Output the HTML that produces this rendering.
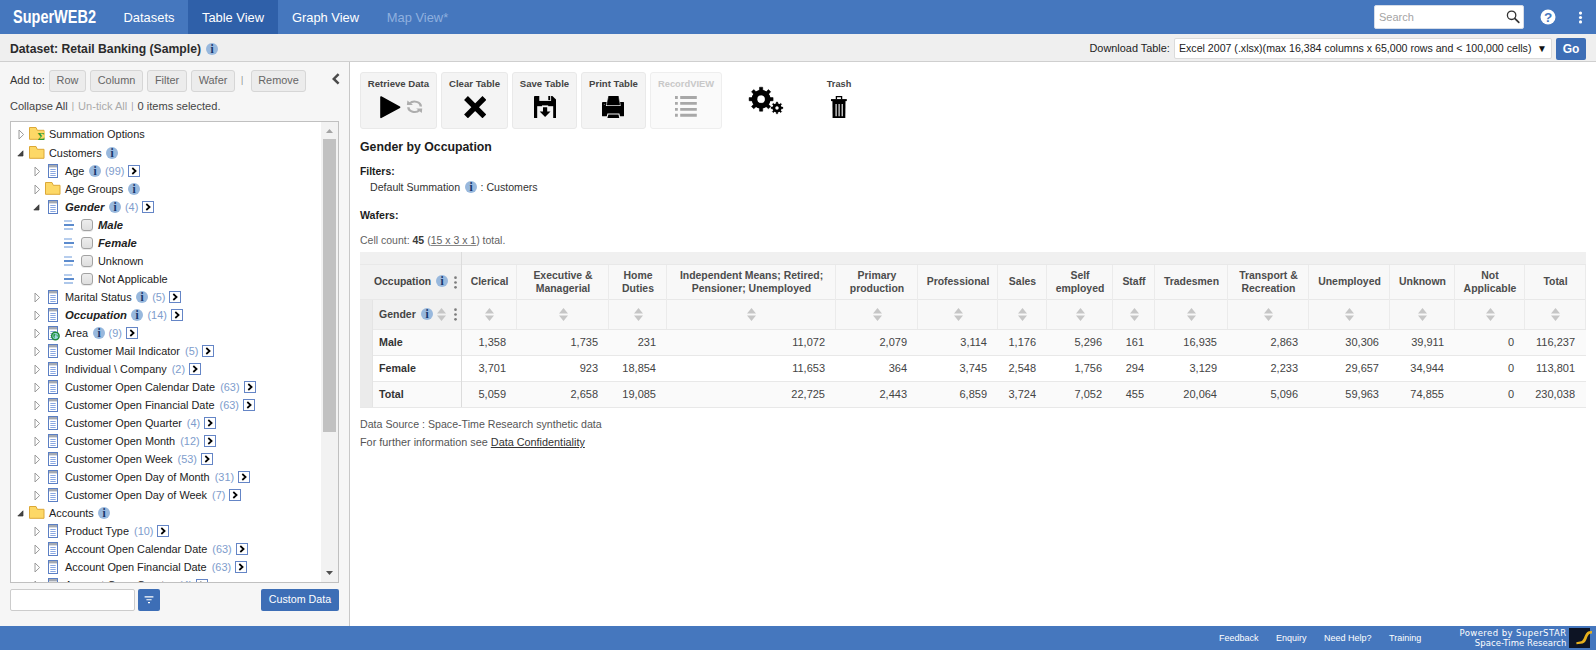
<!DOCTYPE html>
<html lang="en">
<head>
<meta charset="utf-8">
<title>SuperWEB2 - Table View</title>
<style>
*{box-sizing:border-box;margin:0;padding:0}
html,body{width:1596px;height:650px;overflow:hidden;background:#fff}
body{font-family:"Liberation Sans",sans-serif;font-size:12px;color:#333;position:relative}
.abs{position:absolute;white-space:nowrap}
/* header */
#hdr{position:absolute;left:0;top:0;width:1596px;height:34px;background:#4577be}
#logo{position:absolute;left:13px;top:5px;font-size:18px;line-height:24px;font-weight:bold;color:#fff;transform:scaleX(.806);transform-origin:0 50%}
.nav{position:absolute;top:0;height:34px;line-height:35px;font-size:12.9px;color:#fff;text-align:center;white-space:nowrap}
.nav.act{background:#2f60a9}
.nav.dis{color:#8fb0de}
#search{position:absolute;left:1374px;top:5px;width:150px;height:24px;background:#fff;border-radius:2px;border:1px solid #d5dce8}
#search span{position:absolute;left:4px;top:0;line-height:23px;font-size:11px;color:#a4a4a4}
/* sub header */
#sub{position:absolute;left:0;top:34px;width:1596px;height:28px;background:#efefef;border-bottom:1px solid #cfcfcf}
#dstitle{position:absolute;left:10px;top:1px;line-height:28px;font-size:12.2px;font-weight:bold;color:#2b2b2b;white-space:nowrap}
#dl{position:absolute;left:1089.5px;top:0;line-height:28px;font-size:10.9px;color:#222;white-space:nowrap}
#sel{position:absolute;left:1174px;top:4px;width:378px;height:21px;background:#fff;border:1px solid #dbdbdb;border-radius:2px;font-size:10.6px;line-height:19px;padding-left:4px;color:#222;white-space:nowrap;overflow:hidden}
#go{position:absolute;left:1556px;top:4px;width:30px;height:22px;background:#3d6eb6;border-radius:2px;color:#fff;font-size:12px;font-weight:bold;text-align:center;line-height:22px}
/* left panel */
#left{position:absolute;left:0;top:62px;width:350px;height:564px;background:#f6f6f6;border-right:1px solid #c8c8c8}
.btn{position:absolute;top:8px;height:22px;border:1px solid #d6d6d6;background:#ececec;border-radius:3px;font-size:10.9px;line-height:19px;text-align:center;color:#666}
#tree{position:absolute;left:10px;top:59px;width:329px;height:462px;background:#fff;border:1px solid #c0c0c0;overflow:hidden}
.row{position:absolute;left:0;height:18px;line-height:18px;font-size:10.9px;color:#222;white-space:nowrap}
.row .t{position:absolute;top:0}
.cnt{color:#7d9ccc}
.bi{font-weight:bold;font-style:italic;font-size:11.25px}
.nx{margin-left:2px}
.ic{position:absolute}
.inf{display:inline-block;vertical-align:-2px;margin:0 1px 0 1.5px}
.arr{display:inline-block;vertical-align:-2px;margin:0 1px}
.chk{position:absolute;top:3px;width:12px;height:12px;border:1px solid #a2a2a2;border-radius:3px;background:linear-gradient(#ededed,#dedede);box-shadow:0 1px 0 rgba(0,0,0,.08)}
/* footer */
#ftr{position:absolute;left:0;top:626px;width:1596px;height:24px;background:#4577be}
.fl{position:absolute;top:0;line-height:24px;font-size:9px;color:#fff;white-space:nowrap}
#pw{position:absolute;right:29.5px;top:2px;font-family:"DejaVu Sans",sans-serif;font-size:8.5px;line-height:10px;color:#fff;text-align:right;white-space:nowrap;letter-spacing:.3px}
/* main */
.tb{position:absolute;top:72px;height:57px;background:#f4f4f4;border:1px solid #e9e9e9;border-radius:3px}
.tb .l{position:absolute;left:0;right:0;top:4px;text-align:center;font-size:9.6px;font-weight:bold;color:#444;line-height:14px;white-space:nowrap}
.tb.dis{background:#fafafa;border-color:#eeeeee}
.tb.dis .l{color:#c8c8c8;font-size:9.35px}
.tb svg{position:absolute}
.h{font-weight:bold;color:#1c1c1c}
/* table */
#tblbg{position:absolute;left:360px;top:252px;width:1226px;height:155px;background:#fff}
.cell{position:absolute;white-space:nowrap;font-size:11.5px;color:#333}
.hc{position:absolute;text-align:center;font-weight:bold;font-size:10.45px;line-height:13px;color:#4c4c4c}
.num{position:absolute;text-align:right;font-size:11px;color:#444;line-height:26px;height:26px}
.vl{position:absolute;width:1px;background:#e4e4e4}
.hl{position:absolute;height:1px;background:#e8e8e8}
</style>
</head>
<body>
<!-- HEADER -->
<div id="hdr">
  <div id="logo">SuperWEB2</div>
  <div class="nav" style="left:110px;width:78px">Datasets</div>
  <div class="nav act" style="left:188px;width:90px">Table View</div>
  <div class="nav" style="left:278px;width:95px">Graph View</div>
  <div class="nav dis" style="left:373px;width:89px">Map View*</div>
  <div id="search"><span>Search</span>
    <svg style="position:absolute;left:131px;top:3px" width="16" height="16" viewBox="0 0 16 16"><circle cx="5.6" cy="6.3" r="4.2" fill="none" stroke="#333" stroke-width="1.3"/><path d="M8.7 9.4 L12.8 13.4" stroke="#333" stroke-width="1.7" stroke-linecap="round"/></svg>
  </div>
  <svg style="position:absolute;left:1540px;top:9px" width="16" height="16" viewBox="0 0 16 16"><circle cx="8" cy="8" r="7.5" fill="#fff"/><text x="8" y="12.8" text-anchor="middle" font-family="Liberation Sans, sans-serif" font-weight="bold" font-size="13.5" fill="#4577be">?</text></svg>
  <svg style="position:absolute;left:1577.5px;top:10.6px" width="5" height="13" viewBox="0 0 5 13"><circle cx="2.5" cy="2.1" r="1.55" fill="#fff"/><circle cx="2.5" cy="6.5" r="1.55" fill="#fff"/><circle cx="2.5" cy="10.9" r="1.55" fill="#fff"/></svg>
</div>
<!-- SUB HEADER -->
<div id="sub">
  <div id="dstitle">Dataset: Retail Banking (Sample) <svg class="inf" width="12" height="12" viewBox="0 0 12 12"><circle cx="6" cy="6" r="6" fill="#98b8dd"/><text x="6" y="10" text-anchor="middle" font-family="Liberation Serif, serif" font-weight="bold" font-size="11.5" fill="#17356b">i</text></svg></div>
  <div id="dl">Download Table:</div>
  <div id="sel">Excel 2007 (.xlsx)(max 16,384 columns x 65,000 rows and &lt; 100,000 cells)<span style="position:absolute;right:4px;top:0px;font-size:10px;color:#111">&#9660;</span></div>
  <div id="go">Go</div>
</div>
<!-- LEFT PANEL -->
<div id="left">
  <div class="abs" style="left:10px;top:7px;line-height:22px;font-size:11px;color:#333">Add to:</div>
  <div class="btn" style="left:49px;width:37px">Row</div>
  <div class="btn" style="left:90px;width:53px">Column</div>
  <div class="btn" style="left:147px;width:40px">Filter</div>
  <div class="btn" style="left:191px;width:44px">Wafer</div>
  <div class="abs" style="left:241px;top:7px;line-height:22px;font-size:8.5px;color:#888">|</div>
  <div class="btn" style="left:251px;width:55px">Remove</div>
  <svg style="position:absolute;left:330.5px;top:10.6px" width="9" height="12" viewBox="0 0 9 12"><path d="M7.6 1.2 L2.8 5.9 L7.6 10.6" fill="none" stroke="#4a4a4a" stroke-width="2.5"/></svg>
  <div class="abs" style="left:10px;top:36px;line-height:16px;font-size:11.05px;color:#444">Collapse All <span style="color:#999;font-size:8.5px;vertical-align:1px;margin:0 1px">|</span> <span style="color:#aaa">Un-tick All</span> <span style="color:#999;font-size:8.5px;vertical-align:1px;margin:0 1px">|</span> 0 items selected.</div>
  <div id="tree"><div class="row" style="top:3px"><svg class="ic" style="left:7px;top:4px" width="7" height="11" viewBox="0 0 7 11"><path d="M1 1 L5.6 5.5 L1 10 Z" fill="#fff" stroke="#9a9a9a" stroke-width="1"/></svg><svg class="ic" style="left:18px;top:2px" width="17" height="14" viewBox="0 0 17 14"><path d="M.5 12.3 V.5 H7 L8.3 3.3 H15 V12.3 Z" fill="#fdd866" stroke="#dca837" stroke-width="1"/> <rect x="8.6" y="4.5" width="7" height="8.4" fill="#fdd866"/><text x="8.4" y="13.4" font-family="Liberation Serif, serif" font-weight="bold" font-size="11" fill="#2e9a2e">&#931;</text></svg><span class="t" style="left:38px"><span class="">Summation Options</span></span></div>
<div class="row" style="top:22px"><svg class="ic" style="left:6px;top:6.3px" width="7" height="7" viewBox="0 0 7 7"><path d="M6 .8 L6 6 L.8 6 Z" fill="#444" stroke="#333" stroke-width=".7"/></svg><svg class="ic" style="left:18px;top:2px" width="17" height="14" viewBox="0 0 17 14"><path d="M.5 12.3 V.5 H7 L8.3 3.3 H15 V12.3 Z" fill="#fdd866" stroke="#dca837" stroke-width="1"/></svg><span class="t" style="left:38px"><span class="">Customers</span> <svg class="inf" width="12" height="12" viewBox="0 0 12 12"><circle cx="6" cy="6" r="6" fill="#98b8dd"/><text x="6" y="10" text-anchor="middle" font-family="Liberation Serif, serif" font-weight="bold" font-size="11.5" fill="#17356b">i</text></svg></span></div>
<div class="row" style="top:40px"><svg class="ic" style="left:23px;top:4px" width="7" height="11" viewBox="0 0 7 11"><path d="M1 1 L5.6 5.5 L1 10 Z" fill="#fff" stroke="#9a9a9a" stroke-width="1"/></svg><svg class="ic" style="left:37px;top:2px;overflow:visible" width="10" height="14" viewBox="0 0 10 14"><rect x=".5" y=".5" width="9" height="13" fill="#fff" stroke="#5b7fc4"/><rect x="1" y="1" width="8" height="2.4" fill="#a4a9b2"/><path d="M2.3 5.5H7.7M2.3 7.5H7.7M2.3 9.5H7.7M2.3 11.5H7.7" stroke="#8aa8e2" stroke-width="1"/></svg><span class="t" style="left:54px"><span class="">Age</span> <svg class="inf" width="12" height="12" viewBox="0 0 12 12"><circle cx="6" cy="6" r="6" fill="#98b8dd"/><text x="6" y="10" text-anchor="middle" font-family="Liberation Serif, serif" font-weight="bold" font-size="11.5" fill="#17356b">i</text></svg> <span class="cnt">(99)</span> <svg class="arr" width="12" height="12" viewBox="0 0 12 12"><rect x=".5" y=".5" width="11" height="11" fill="#fff" stroke="#6485c6"/><path d="M4.3 3 L7.6 6 L4.3 9" fill="none" stroke="#000" stroke-width="1.7"/></svg></span></div>
<div class="row" style="top:58px"><svg class="ic" style="left:23px;top:4px" width="7" height="11" viewBox="0 0 7 11"><path d="M1 1 L5.6 5.5 L1 10 Z" fill="#fff" stroke="#9a9a9a" stroke-width="1"/></svg><svg class="ic" style="left:34px;top:2px" width="17" height="14" viewBox="0 0 17 14"><path d="M.5 12.3 V.5 H7 L8.3 3.3 H15 V12.3 Z" fill="#fdd866" stroke="#dca837" stroke-width="1"/></svg><span class="t" style="left:54px"><span class="">Age Groups</span> <svg class="inf" width="12" height="12" viewBox="0 0 12 12"><circle cx="6" cy="6" r="6" fill="#98b8dd"/><text x="6" y="10" text-anchor="middle" font-family="Liberation Serif, serif" font-weight="bold" font-size="11.5" fill="#17356b">i</text></svg></span></div>
<div class="row" style="top:76px"><svg class="ic" style="left:22px;top:6.3px" width="7" height="7" viewBox="0 0 7 7"><path d="M6 .8 L6 6 L.8 6 Z" fill="#444" stroke="#333" stroke-width=".7"/></svg><svg class="ic" style="left:37px;top:2px;overflow:visible" width="10" height="14" viewBox="0 0 10 14"><rect x=".5" y=".5" width="9" height="13" fill="#fff" stroke="#5b7fc4"/><rect x="1" y="1" width="8" height="2.4" fill="#a4a9b2"/><path d="M2.3 5.5H7.7M2.3 7.5H7.7M2.3 9.5H7.7M2.3 11.5H7.7" stroke="#8aa8e2" stroke-width="1"/></svg><span class="t" style="left:54px"><span class="bi">Gender</span> <svg class="inf" width="12" height="12" viewBox="0 0 12 12"><circle cx="6" cy="6" r="6" fill="#98b8dd"/><text x="6" y="10" text-anchor="middle" font-family="Liberation Serif, serif" font-weight="bold" font-size="11.5" fill="#17356b">i</text></svg> <span class="cnt">(4)</span> <svg class="arr" width="12" height="12" viewBox="0 0 12 12"><rect x=".5" y=".5" width="11" height="11" fill="#fff" stroke="#6485c6"/><path d="M4.3 3 L7.6 6 L4.3 9" fill="none" stroke="#000" stroke-width="1.7"/></svg></span></div>
<div class="row" style="top:94px"><svg class="ic" style="left:53px;top:4px" width="10" height="10" viewBox="0 0 10 10"><path d="M0 1H8" stroke="#a9c5ea" stroke-width="1.7"/><path d="M0 5H10" stroke="#3f76c4" stroke-width="1.7"/><path d="M0 9H9" stroke="#9fbde7" stroke-width="1.7"/></svg><span class="chk" style="left:70px"></span><span class="t" style="left:87px"><span class="bi">Male</span></span></div>
<div class="row" style="top:112px"><svg class="ic" style="left:53px;top:4px" width="10" height="10" viewBox="0 0 10 10"><path d="M0 1H8" stroke="#a9c5ea" stroke-width="1.7"/><path d="M0 5H10" stroke="#3f76c4" stroke-width="1.7"/><path d="M0 9H9" stroke="#9fbde7" stroke-width="1.7"/></svg><span class="chk" style="left:70px"></span><span class="t" style="left:87px"><span class="bi">Female</span></span></div>
<div class="row" style="top:130px"><svg class="ic" style="left:53px;top:4px" width="10" height="10" viewBox="0 0 10 10"><path d="M0 1H8" stroke="#a9c5ea" stroke-width="1.7"/><path d="M0 5H10" stroke="#3f76c4" stroke-width="1.7"/><path d="M0 9H9" stroke="#9fbde7" stroke-width="1.7"/></svg><span class="chk" style="left:70px"></span><span class="t" style="left:87px"><span class="">Unknown</span></span></div>
<div class="row" style="top:148px"><svg class="ic" style="left:53px;top:4px" width="10" height="10" viewBox="0 0 10 10"><path d="M0 1H8" stroke="#a9c5ea" stroke-width="1.7"/><path d="M0 5H10" stroke="#3f76c4" stroke-width="1.7"/><path d="M0 9H9" stroke="#9fbde7" stroke-width="1.7"/></svg><span class="chk" style="left:70px"></span><span class="t" style="left:87px"><span class="">Not Applicable</span></span></div>
<div class="row" style="top:166px"><svg class="ic" style="left:23px;top:4px" width="7" height="11" viewBox="0 0 7 11"><path d="M1 1 L5.6 5.5 L1 10 Z" fill="#fff" stroke="#9a9a9a" stroke-width="1"/></svg><svg class="ic" style="left:37px;top:2px;overflow:visible" width="10" height="14" viewBox="0 0 10 14"><rect x=".5" y=".5" width="9" height="13" fill="#fff" stroke="#5b7fc4"/><rect x="1" y="1" width="8" height="2.4" fill="#a4a9b2"/><path d="M2.3 5.5H7.7M2.3 7.5H7.7M2.3 9.5H7.7M2.3 11.5H7.7" stroke="#8aa8e2" stroke-width="1"/></svg><span class="t" style="left:54px"><span class="">Marital Status</span> <svg class="inf" width="12" height="12" viewBox="0 0 12 12"><circle cx="6" cy="6" r="6" fill="#98b8dd"/><text x="6" y="10" text-anchor="middle" font-family="Liberation Serif, serif" font-weight="bold" font-size="11.5" fill="#17356b">i</text></svg> <span class="cnt">(5)</span> <svg class="arr" width="12" height="12" viewBox="0 0 12 12"><rect x=".5" y=".5" width="11" height="11" fill="#fff" stroke="#6485c6"/><path d="M4.3 3 L7.6 6 L4.3 9" fill="none" stroke="#000" stroke-width="1.7"/></svg></span></div>
<div class="row" style="top:184px"><svg class="ic" style="left:23px;top:4px" width="7" height="11" viewBox="0 0 7 11"><path d="M1 1 L5.6 5.5 L1 10 Z" fill="#fff" stroke="#9a9a9a" stroke-width="1"/></svg><svg class="ic" style="left:37px;top:2px;overflow:visible" width="10" height="14" viewBox="0 0 10 14"><rect x=".5" y=".5" width="9" height="13" fill="#fff" stroke="#5b7fc4"/><rect x="1" y="1" width="8" height="2.4" fill="#a4a9b2"/><path d="M2.3 5.5H7.7M2.3 7.5H7.7M2.3 9.5H7.7M2.3 11.5H7.7" stroke="#8aa8e2" stroke-width="1"/></svg><span class="t" style="left:54px"><span class="bi">Occupation</span> <svg class="inf" width="12" height="12" viewBox="0 0 12 12"><circle cx="6" cy="6" r="6" fill="#98b8dd"/><text x="6" y="10" text-anchor="middle" font-family="Liberation Serif, serif" font-weight="bold" font-size="11.5" fill="#17356b">i</text></svg> <span class="cnt">(14)</span> <svg class="arr" width="12" height="12" viewBox="0 0 12 12"><rect x=".5" y=".5" width="11" height="11" fill="#fff" stroke="#6485c6"/><path d="M4.3 3 L7.6 6 L4.3 9" fill="none" stroke="#000" stroke-width="1.7"/></svg></span></div>
<div class="row" style="top:202px"><svg class="ic" style="left:23px;top:4px" width="7" height="11" viewBox="0 0 7 11"><path d="M1 1 L5.6 5.5 L1 10 Z" fill="#fff" stroke="#9a9a9a" stroke-width="1"/></svg><svg class="ic" style="left:37px;top:2px;overflow:visible" width="10" height="14" viewBox="0 0 10 14"><rect x=".5" y=".5" width="9" height="13" fill="#fff" stroke="#5b7fc4"/><rect x="1" y="1" width="8" height="2.4" fill="#a4a9b2"/><path d="M2.3 5.5H7.7M2.3 7.5H7.7M2.3 9.5H7.7M2.3 11.5H7.7" stroke="#8aa8e2" stroke-width="1"/><circle cx="7.4" cy="10" r="3.7" fill="#9fd8e8" stroke="#1e8a38" stroke-width="1.5"/><path d="M5.2 8.6 q1.4 -1.4 2.4 -.6 q-.2 1.6 -1 2.2 q.4 1.4 -.2 2 q-1.6 -1.2 -1.2 -3.6z M8.6 8 q1.4 .8 1.2 2.6 q-.8 .2 -1.2 -.6z" fill="#2c9c48"/></svg><span class="t" style="left:54px"><span class="">Area</span> <svg class="inf" width="12" height="12" viewBox="0 0 12 12"><circle cx="6" cy="6" r="6" fill="#98b8dd"/><text x="6" y="10" text-anchor="middle" font-family="Liberation Serif, serif" font-weight="bold" font-size="11.5" fill="#17356b">i</text></svg> <span class="cnt">(9)</span> <svg class="arr" width="12" height="12" viewBox="0 0 12 12"><rect x=".5" y=".5" width="11" height="11" fill="#fff" stroke="#6485c6"/><path d="M4.3 3 L7.6 6 L4.3 9" fill="none" stroke="#000" stroke-width="1.7"/></svg></span></div>
<div class="row" style="top:220px"><svg class="ic" style="left:23px;top:4px" width="7" height="11" viewBox="0 0 7 11"><path d="M1 1 L5.6 5.5 L1 10 Z" fill="#fff" stroke="#9a9a9a" stroke-width="1"/></svg><svg class="ic" style="left:37px;top:2px;overflow:visible" width="10" height="14" viewBox="0 0 10 14"><rect x=".5" y=".5" width="9" height="13" fill="#fff" stroke="#5b7fc4"/><rect x="1" y="1" width="8" height="2.4" fill="#a4a9b2"/><path d="M2.3 5.5H7.7M2.3 7.5H7.7M2.3 9.5H7.7M2.3 11.5H7.7" stroke="#8aa8e2" stroke-width="1"/></svg><span class="t" style="left:54px"><span class="">Customer Mail Indicator</span> <span class="cnt nx">(5)</span> <svg class="arr" width="12" height="12" viewBox="0 0 12 12"><rect x=".5" y=".5" width="11" height="11" fill="#fff" stroke="#6485c6"/><path d="M4.3 3 L7.6 6 L4.3 9" fill="none" stroke="#000" stroke-width="1.7"/></svg></span></div>
<div class="row" style="top:238px"><svg class="ic" style="left:23px;top:4px" width="7" height="11" viewBox="0 0 7 11"><path d="M1 1 L5.6 5.5 L1 10 Z" fill="#fff" stroke="#9a9a9a" stroke-width="1"/></svg><svg class="ic" style="left:37px;top:2px;overflow:visible" width="10" height="14" viewBox="0 0 10 14"><rect x=".5" y=".5" width="9" height="13" fill="#fff" stroke="#5b7fc4"/><rect x="1" y="1" width="8" height="2.4" fill="#a4a9b2"/><path d="M2.3 5.5H7.7M2.3 7.5H7.7M2.3 9.5H7.7M2.3 11.5H7.7" stroke="#8aa8e2" stroke-width="1"/></svg><span class="t" style="left:54px"><span class="">Individual \ Company</span> <span class="cnt nx">(2)</span> <svg class="arr" width="12" height="12" viewBox="0 0 12 12"><rect x=".5" y=".5" width="11" height="11" fill="#fff" stroke="#6485c6"/><path d="M4.3 3 L7.6 6 L4.3 9" fill="none" stroke="#000" stroke-width="1.7"/></svg></span></div>
<div class="row" style="top:256px"><svg class="ic" style="left:23px;top:4px" width="7" height="11" viewBox="0 0 7 11"><path d="M1 1 L5.6 5.5 L1 10 Z" fill="#fff" stroke="#9a9a9a" stroke-width="1"/></svg><svg class="ic" style="left:37px;top:2px;overflow:visible" width="10" height="14" viewBox="0 0 10 14"><rect x=".5" y=".5" width="9" height="13" fill="#fff" stroke="#5b7fc4"/><rect x="1" y="1" width="8" height="2.4" fill="#a4a9b2"/><path d="M2.3 5.5H7.7M2.3 7.5H7.7M2.3 9.5H7.7M2.3 11.5H7.7" stroke="#8aa8e2" stroke-width="1"/></svg><span class="t" style="left:54px"><span class="">Customer Open Calendar Date</span> <span class="cnt nx">(63)</span> <svg class="arr" width="12" height="12" viewBox="0 0 12 12"><rect x=".5" y=".5" width="11" height="11" fill="#fff" stroke="#6485c6"/><path d="M4.3 3 L7.6 6 L4.3 9" fill="none" stroke="#000" stroke-width="1.7"/></svg></span></div>
<div class="row" style="top:274px"><svg class="ic" style="left:23px;top:4px" width="7" height="11" viewBox="0 0 7 11"><path d="M1 1 L5.6 5.5 L1 10 Z" fill="#fff" stroke="#9a9a9a" stroke-width="1"/></svg><svg class="ic" style="left:37px;top:2px;overflow:visible" width="10" height="14" viewBox="0 0 10 14"><rect x=".5" y=".5" width="9" height="13" fill="#fff" stroke="#5b7fc4"/><rect x="1" y="1" width="8" height="2.4" fill="#a4a9b2"/><path d="M2.3 5.5H7.7M2.3 7.5H7.7M2.3 9.5H7.7M2.3 11.5H7.7" stroke="#8aa8e2" stroke-width="1"/></svg><span class="t" style="left:54px"><span class="">Customer Open Financial Date</span> <span class="cnt nx">(63)</span> <svg class="arr" width="12" height="12" viewBox="0 0 12 12"><rect x=".5" y=".5" width="11" height="11" fill="#fff" stroke="#6485c6"/><path d="M4.3 3 L7.6 6 L4.3 9" fill="none" stroke="#000" stroke-width="1.7"/></svg></span></div>
<div class="row" style="top:292px"><svg class="ic" style="left:23px;top:4px" width="7" height="11" viewBox="0 0 7 11"><path d="M1 1 L5.6 5.5 L1 10 Z" fill="#fff" stroke="#9a9a9a" stroke-width="1"/></svg><svg class="ic" style="left:37px;top:2px;overflow:visible" width="10" height="14" viewBox="0 0 10 14"><rect x=".5" y=".5" width="9" height="13" fill="#fff" stroke="#5b7fc4"/><rect x="1" y="1" width="8" height="2.4" fill="#a4a9b2"/><path d="M2.3 5.5H7.7M2.3 7.5H7.7M2.3 9.5H7.7M2.3 11.5H7.7" stroke="#8aa8e2" stroke-width="1"/></svg><span class="t" style="left:54px"><span class="">Customer Open Quarter</span> <span class="cnt nx">(4)</span> <svg class="arr" width="12" height="12" viewBox="0 0 12 12"><rect x=".5" y=".5" width="11" height="11" fill="#fff" stroke="#6485c6"/><path d="M4.3 3 L7.6 6 L4.3 9" fill="none" stroke="#000" stroke-width="1.7"/></svg></span></div>
<div class="row" style="top:310px"><svg class="ic" style="left:23px;top:4px" width="7" height="11" viewBox="0 0 7 11"><path d="M1 1 L5.6 5.5 L1 10 Z" fill="#fff" stroke="#9a9a9a" stroke-width="1"/></svg><svg class="ic" style="left:37px;top:2px;overflow:visible" width="10" height="14" viewBox="0 0 10 14"><rect x=".5" y=".5" width="9" height="13" fill="#fff" stroke="#5b7fc4"/><rect x="1" y="1" width="8" height="2.4" fill="#a4a9b2"/><path d="M2.3 5.5H7.7M2.3 7.5H7.7M2.3 9.5H7.7M2.3 11.5H7.7" stroke="#8aa8e2" stroke-width="1"/></svg><span class="t" style="left:54px"><span class="">Customer Open Month</span> <span class="cnt nx">(12)</span> <svg class="arr" width="12" height="12" viewBox="0 0 12 12"><rect x=".5" y=".5" width="11" height="11" fill="#fff" stroke="#6485c6"/><path d="M4.3 3 L7.6 6 L4.3 9" fill="none" stroke="#000" stroke-width="1.7"/></svg></span></div>
<div class="row" style="top:328px"><svg class="ic" style="left:23px;top:4px" width="7" height="11" viewBox="0 0 7 11"><path d="M1 1 L5.6 5.5 L1 10 Z" fill="#fff" stroke="#9a9a9a" stroke-width="1"/></svg><svg class="ic" style="left:37px;top:2px;overflow:visible" width="10" height="14" viewBox="0 0 10 14"><rect x=".5" y=".5" width="9" height="13" fill="#fff" stroke="#5b7fc4"/><rect x="1" y="1" width="8" height="2.4" fill="#a4a9b2"/><path d="M2.3 5.5H7.7M2.3 7.5H7.7M2.3 9.5H7.7M2.3 11.5H7.7" stroke="#8aa8e2" stroke-width="1"/></svg><span class="t" style="left:54px"><span class="">Customer Open Week</span> <span class="cnt nx">(53)</span> <svg class="arr" width="12" height="12" viewBox="0 0 12 12"><rect x=".5" y=".5" width="11" height="11" fill="#fff" stroke="#6485c6"/><path d="M4.3 3 L7.6 6 L4.3 9" fill="none" stroke="#000" stroke-width="1.7"/></svg></span></div>
<div class="row" style="top:346px"><svg class="ic" style="left:23px;top:4px" width="7" height="11" viewBox="0 0 7 11"><path d="M1 1 L5.6 5.5 L1 10 Z" fill="#fff" stroke="#9a9a9a" stroke-width="1"/></svg><svg class="ic" style="left:37px;top:2px;overflow:visible" width="10" height="14" viewBox="0 0 10 14"><rect x=".5" y=".5" width="9" height="13" fill="#fff" stroke="#5b7fc4"/><rect x="1" y="1" width="8" height="2.4" fill="#a4a9b2"/><path d="M2.3 5.5H7.7M2.3 7.5H7.7M2.3 9.5H7.7M2.3 11.5H7.7" stroke="#8aa8e2" stroke-width="1"/></svg><span class="t" style="left:54px"><span class="">Customer Open Day of Month</span> <span class="cnt nx">(31)</span> <svg class="arr" width="12" height="12" viewBox="0 0 12 12"><rect x=".5" y=".5" width="11" height="11" fill="#fff" stroke="#6485c6"/><path d="M4.3 3 L7.6 6 L4.3 9" fill="none" stroke="#000" stroke-width="1.7"/></svg></span></div>
<div class="row" style="top:364px"><svg class="ic" style="left:23px;top:4px" width="7" height="11" viewBox="0 0 7 11"><path d="M1 1 L5.6 5.5 L1 10 Z" fill="#fff" stroke="#9a9a9a" stroke-width="1"/></svg><svg class="ic" style="left:37px;top:2px;overflow:visible" width="10" height="14" viewBox="0 0 10 14"><rect x=".5" y=".5" width="9" height="13" fill="#fff" stroke="#5b7fc4"/><rect x="1" y="1" width="8" height="2.4" fill="#a4a9b2"/><path d="M2.3 5.5H7.7M2.3 7.5H7.7M2.3 9.5H7.7M2.3 11.5H7.7" stroke="#8aa8e2" stroke-width="1"/></svg><span class="t" style="left:54px"><span class="">Customer Open Day of Week</span> <span class="cnt nx">(7)</span> <svg class="arr" width="12" height="12" viewBox="0 0 12 12"><rect x=".5" y=".5" width="11" height="11" fill="#fff" stroke="#6485c6"/><path d="M4.3 3 L7.6 6 L4.3 9" fill="none" stroke="#000" stroke-width="1.7"/></svg></span></div>
<div class="row" style="top:382px"><svg class="ic" style="left:6px;top:6.3px" width="7" height="7" viewBox="0 0 7 7"><path d="M6 .8 L6 6 L.8 6 Z" fill="#444" stroke="#333" stroke-width=".7"/></svg><svg class="ic" style="left:18px;top:2px" width="17" height="14" viewBox="0 0 17 14"><path d="M.5 12.3 V.5 H7 L8.3 3.3 H15 V12.3 Z" fill="#fdd866" stroke="#dca837" stroke-width="1"/></svg><span class="t" style="left:38px"><span class="">Accounts</span> <svg class="inf" width="12" height="12" viewBox="0 0 12 12"><circle cx="6" cy="6" r="6" fill="#98b8dd"/><text x="6" y="10" text-anchor="middle" font-family="Liberation Serif, serif" font-weight="bold" font-size="11.5" fill="#17356b">i</text></svg></span></div>
<div class="row" style="top:400px"><svg class="ic" style="left:23px;top:4px" width="7" height="11" viewBox="0 0 7 11"><path d="M1 1 L5.6 5.5 L1 10 Z" fill="#fff" stroke="#9a9a9a" stroke-width="1"/></svg><svg class="ic" style="left:37px;top:2px;overflow:visible" width="10" height="14" viewBox="0 0 10 14"><rect x=".5" y=".5" width="9" height="13" fill="#fff" stroke="#5b7fc4"/><rect x="1" y="1" width="8" height="2.4" fill="#a4a9b2"/><path d="M2.3 5.5H7.7M2.3 7.5H7.7M2.3 9.5H7.7M2.3 11.5H7.7" stroke="#8aa8e2" stroke-width="1"/></svg><span class="t" style="left:54px"><span class="">Product Type</span> <span class="cnt nx">(10)</span> <svg class="arr" width="12" height="12" viewBox="0 0 12 12"><rect x=".5" y=".5" width="11" height="11" fill="#fff" stroke="#6485c6"/><path d="M4.3 3 L7.6 6 L4.3 9" fill="none" stroke="#000" stroke-width="1.7"/></svg></span></div>
<div class="row" style="top:418px"><svg class="ic" style="left:23px;top:4px" width="7" height="11" viewBox="0 0 7 11"><path d="M1 1 L5.6 5.5 L1 10 Z" fill="#fff" stroke="#9a9a9a" stroke-width="1"/></svg><svg class="ic" style="left:37px;top:2px;overflow:visible" width="10" height="14" viewBox="0 0 10 14"><rect x=".5" y=".5" width="9" height="13" fill="#fff" stroke="#5b7fc4"/><rect x="1" y="1" width="8" height="2.4" fill="#a4a9b2"/><path d="M2.3 5.5H7.7M2.3 7.5H7.7M2.3 9.5H7.7M2.3 11.5H7.7" stroke="#8aa8e2" stroke-width="1"/></svg><span class="t" style="left:54px"><span class="">Account Open Calendar Date</span> <span class="cnt nx">(63)</span> <svg class="arr" width="12" height="12" viewBox="0 0 12 12"><rect x=".5" y=".5" width="11" height="11" fill="#fff" stroke="#6485c6"/><path d="M4.3 3 L7.6 6 L4.3 9" fill="none" stroke="#000" stroke-width="1.7"/></svg></span></div>
<div class="row" style="top:436px"><svg class="ic" style="left:23px;top:4px" width="7" height="11" viewBox="0 0 7 11"><path d="M1 1 L5.6 5.5 L1 10 Z" fill="#fff" stroke="#9a9a9a" stroke-width="1"/></svg><svg class="ic" style="left:37px;top:2px;overflow:visible" width="10" height="14" viewBox="0 0 10 14"><rect x=".5" y=".5" width="9" height="13" fill="#fff" stroke="#5b7fc4"/><rect x="1" y="1" width="8" height="2.4" fill="#a4a9b2"/><path d="M2.3 5.5H7.7M2.3 7.5H7.7M2.3 9.5H7.7M2.3 11.5H7.7" stroke="#8aa8e2" stroke-width="1"/></svg><span class="t" style="left:54px"><span class="">Account Open Financial Date</span> <span class="cnt nx">(63)</span> <svg class="arr" width="12" height="12" viewBox="0 0 12 12"><rect x=".5" y=".5" width="11" height="11" fill="#fff" stroke="#6485c6"/><path d="M4.3 3 L7.6 6 L4.3 9" fill="none" stroke="#000" stroke-width="1.7"/></svg></span></div>
<div class="row" style="top:454px"><svg class="ic" style="left:23px;top:4px" width="7" height="11" viewBox="0 0 7 11"><path d="M1 1 L5.6 5.5 L1 10 Z" fill="#fff" stroke="#9a9a9a" stroke-width="1"/></svg><svg class="ic" style="left:37px;top:2px;overflow:visible" width="10" height="14" viewBox="0 0 10 14"><rect x=".5" y=".5" width="9" height="13" fill="#fff" stroke="#5b7fc4"/><rect x="1" y="1" width="8" height="2.4" fill="#a4a9b2"/><path d="M2.3 5.5H7.7M2.3 7.5H7.7M2.3 9.5H7.7M2.3 11.5H7.7" stroke="#8aa8e2" stroke-width="1"/></svg><span class="t" style="left:54px"><span class="">Account Open Quarter</span> <span class="cnt nx">(4)</span> <svg class="arr" width="12" height="12" viewBox="0 0 12 12"><rect x=".5" y=".5" width="11" height="11" fill="#fff" stroke="#6485c6"/><path d="M4.3 3 L7.6 6 L4.3 9" fill="none" stroke="#000" stroke-width="1.7"/></svg></span></div>
<div style="position:absolute;left:310px;top:0;width:17px;height:460px;background:#f2f2f2">
<svg style="position:absolute;left:5.2px;top:7.2px" width="7" height="4" viewBox="0 0 7 4"><path d="M0 4 L3.5 0 L7 4Z" fill="#a3a3a3"/></svg>
<div style="position:absolute;left:1.5px;top:17px;width:13.75px;height:293px;background:#c1c1c1"></div>
<svg style="position:absolute;left:5.2px;top:448.6px" width="7" height="4" viewBox="0 0 7 4"><path d="M0 0 L3.5 4 L7 0Z" fill="#505050"/></svg>
</div></div>
  <div style="position:absolute;left:10px;top:527px;width:125px;height:22px;background:#fff;border:1px solid #ccc;border-radius:2px"></div>
  <div style="position:absolute;left:138px;top:527px;width:22px;height:22px;background:#3d6eb6;border-radius:2px">
    <svg style="position:absolute;left:6px;top:7px" width="10" height="8" viewBox="0 0 10 8"><path d="M.6 .8H9.4M2.4 3.7H7.6M4 6.6H6" stroke="#fff" stroke-width="1.15"/></svg>
  </div>
  <div style="position:absolute;left:261px;top:527px;width:78px;height:22px;background:#3d6eb6;border-radius:2px;color:#fff;font-size:10.7px;line-height:21px;text-align:center">Custom Data</div>
</div>
<!-- MAIN -->
<div class="tb" style="left:360px;width:77px"><div class="l">Retrieve Data</div><svg style="left:19px;top:22.8px" width="21" height="23" viewBox="0 0 21 23"><path d="M1 1 L19.6 11.2 L1 21.4 Z" fill="#000" stroke="#000" stroke-width="1.6" stroke-linejoin="round"/></svg><svg style="left:43.4px;top:27px" width="20.7" height="13.6" viewBox="0 0 17 14" preserveAspectRatio="none"><g transform="translate(17,0) scale(-1,1)"><path d="M3.2 6.6 A5.1 5.1 0 0 1 12.3 3.6" fill="none" stroke="#adadad" stroke-width="2"/><path d="M9.6 5.2 L14.6 5.2 L14.2 .6Z" fill="#adadad"/><path d="M13.4 7.4 A5.1 5.1 0 0 1 4.3 10.4" fill="none" stroke="#adadad" stroke-width="2"/><path d="M7 8.8 L2 8.8 L2.4 13.4Z" fill="#adadad"/></g></svg></div>
<div class="tb" style="left:441px;width:67px"><div class="l">Clear Table</div><svg style="left:21.8px;top:22.8px" width="22.4" height="22.4" viewBox="0 0 22.4 22.4"><path d="M2 2 L20.4 20.4 M20.4 2 L2 20.4" stroke="#000" stroke-width="5.4" stroke-linecap="butt"/></svg></div>
<div class="tb" style="left:512px;width:65px"><div class="l">Save Table</div><svg style="left:20.8px;top:22.8px" width="22.4" height="22.2" viewBox="0 0 22.4 22.2"><path d="M.8 0 H18.4 L22.4 3.8 V21.4 Q22.4 22.2 21.6 22.2 H.8 Q0 22.2 0 21.4 V.8 Q0 0 .8 0Z" fill="#000"/><rect x="5.3" y="-1" width="11.8" height="5.9" fill="#f4f4f4"/><rect x="14.3" y="0" width="1.9" height="4.1" fill="#000"/><rect x="3.2" y="10.2" width="16" height="13" fill="#f4f4f4"/><rect x="8" y="9.4" width="6.2" height="2" fill="#f4f4f4"/><path d="M9 11.3 H13.2 V15.4 H16.5 L11.1 21 L5.7 15.4 H9 Z" fill="#000"/></svg></div>
<div class="tb" style="left:581px;width:65px"><div class="l">Print Table</div><svg style="left:19.8px;top:22.8px" width="22.2" height="22.2" viewBox="0 0 22.2 22.2"><rect x="0" y="6" width="22.2" height="14.3" rx=".9" fill="#000"/><path d="M5.9 -1 H17.1 L18.7 9.9 H3.9 Z" fill="#f4f4f4"/><path d="M6.8 0 H16.2 L17.7 9 H4.9 Z" fill="#000" stroke="#000" stroke-width=".6" stroke-linejoin="round"/><path d="M5.4 17.5 H17.4 L18.6 23 H4.2 Z" fill="#f4f4f4"/><path d="M6.4 18.5 H16.5 L17.3 22.2 H5.3 Z" fill="#000"/><circle cx="2.4" cy="8.4" r=".7" fill="#555"/></svg></div>
<div class="tb dis" style="left:650px;width:72px"><div class="l">RecordVIEW</div><svg style="left:24.1px;top:22.9px" width="22" height="21" viewBox="0 0 22 21"><path d="M0 1.5H2.8M5.2 1.5H21.8M0 7.4H2.8M5.2 7.4H21.8M0 13.4H2.8M5.2 13.4H21.8M0 19.3H2.8M5.2 19.3H21.8" stroke="#a8a8a8" stroke-width="2.9"/></svg></div>
<svg class="abs" style="left:748px;top:85px" width="38" height="32" viewBox="0 0 38 32"><path d="M21.94 12.50 L25.09 12.61 L25.09 15.79 L21.94 15.90 L20.55 19.25 L22.71 21.56 L20.46 23.81 L18.15 21.65 L14.80 23.04 L14.69 26.19 L11.51 26.19 L11.40 23.04 L8.05 21.65 L5.74 23.81 L3.49 21.56 L5.65 19.25 L4.26 15.90 L1.11 15.79 L1.11 12.61 L4.26 12.50 L5.65 9.15 L3.49 6.84 L5.74 4.59 L8.05 6.75 L11.40 5.36 L11.51 2.21 L14.69 2.21 L14.80 5.36 L18.15 6.75 L20.46 4.59 L22.71 6.84 L20.55 9.15Z M17.20 14.20 A4.1 4.1 0 1 0 9.00 14.20 A4.1 4.1 0 1 0 17.20 14.20Z" fill="#000" fill-rule="evenodd" stroke="#000" stroke-width=".5" stroke-linejoin="round"/><circle cx="13.1" cy="14.2" r="6.7" fill="none" stroke="#000" stroke-width="5.2"/><path d="M33.22 22.09 L34.95 22.11 L34.95 23.69 L33.22 23.71 L32.56 25.31 L33.76 26.55 L32.65 27.66 L31.41 26.46 L29.81 27.12 L29.79 28.85 L28.21 28.85 L28.19 27.12 L26.59 26.46 L25.35 27.66 L24.24 26.55 L25.44 25.31 L24.78 23.71 L23.05 23.69 L23.05 22.11 L24.78 22.09 L25.44 20.49 L24.24 19.25 L25.35 18.14 L26.59 19.34 L28.19 18.68 L28.21 16.95 L29.79 16.95 L29.81 18.68 L31.41 19.34 L32.65 18.14 L33.76 19.25 L32.56 20.49Z M31.00 22.90 A2.0 2.0 0 1 0 27.00 22.90 A2.0 2.0 0 1 0 31.00 22.90Z" fill="#000" fill-rule="evenodd" stroke="#000" stroke-width=".3" stroke-linejoin="round"/><circle cx="29" cy="22.9" r="3.25" fill="none" stroke="#000" stroke-width="2.5"/></svg>
<div class="abs" style="left:819px;top:77px;width:40px;text-align:center;font-size:9.2px;font-weight:bold;color:#444;line-height:14px">Trash</div>
<svg class="abs" style="left:831px;top:95.9px" width="15.8" height="22.1" viewBox="0 0 15.8 22.1"><path d="M5.4 3.4 V.7 H10.6 V3.4" fill="none" stroke="#000" stroke-width="1.3"/><rect x="0" y="3.1" width="15.8" height="2" fill="#000"/><path d="M1.4 5.1 H14.5 L14.3 22.1 H1.6 Z" fill="#000"/><path d="M5.1 7.9V20.3M8.1 7.9V20.3M11.2 7.9V20.3" stroke="#fff" stroke-width="1.1"/></svg>
<div class="abs h" style="left:360px;top:138px;line-height:18px;font-size:12.3px">Gender by Occupation</div>
<div class="abs h" style="left:360px;top:163.6px;line-height:16px;font-size:10.4px">Filters:</div>
<div class="abs" style="left:370px;top:179px;line-height:16px;font-size:10.6px;color:#333">Default Summation <svg class="inf" width="12" height="12" viewBox="0 0 12 12"><circle cx="6" cy="6" r="6" fill="#98b8dd"/><text x="6" y="10" text-anchor="middle" font-family="Liberation Serif, serif" font-weight="bold" font-size="11.5" fill="#17356b">i</text></svg> : Customers</div>
<div class="abs h" style="left:360px;top:206.5px;line-height:16px;font-size:10.6px">Wafers:</div>
<div class="abs" style="left:360px;top:232px;line-height:16px;font-size:10.5px;color:#626262">Cell count: <b style="color:#3a3a3a">45</b> (<u style="text-decoration-color:#888">15 x 3 x 1</u>) total.</div>
<div class="abs" style="left:360px;top:252px;width:1226px;height:13px;background:#f0f0f0"></div>
<div class="abs" style="left:360px;top:265px;width:102px;height:64px;background:#f1f1f1"></div>
<div class="abs" style="left:462px;top:265px;width:1124px;height:64px;background:#f8f8f8"></div>
<div class="abs" style="left:360px;top:300px;width:13px;height:107px;background:#ebebeb"></div>
<div class="abs" style="left:373px;top:329px;width:1213px;height:26px;background:#fafafa"></div>
<div class="abs" style="left:373px;top:381px;width:1213px;height:26px;background:#fafafa"></div>
<div class="hl" style="left:360px;top:264px;width:1226px"></div>
<div class="hl" style="left:360px;top:299px;width:1226px"></div>
<div class="hl" style="left:373px;top:329px;width:1213px"></div>
<div class="hl" style="left:373px;top:355px;width:1213px"></div>
<div class="hl" style="left:373px;top:381px;width:1213px"></div>
<div class="hl" style="left:360px;top:407px;width:1226px"></div>
<div class="vl" style="left:461px;top:252px;height:155px;background:#dcdcdc"></div>
<div class="vl" style="left:372px;top:300px;height:107px"></div>
<div class="vl" style="left:516px;top:265px;height:64px;background:#ebebeb"></div>
<div class="vl" style="left:608px;top:265px;height:64px;background:#ebebeb"></div>
<div class="vl" style="left:666px;top:265px;height:64px;background:#ebebeb"></div>
<div class="vl" style="left:835px;top:265px;height:64px;background:#ebebeb"></div>
<div class="vl" style="left:917px;top:265px;height:64px;background:#ebebeb"></div>
<div class="vl" style="left:997px;top:265px;height:64px;background:#ebebeb"></div>
<div class="vl" style="left:1046px;top:265px;height:64px;background:#ebebeb"></div>
<div class="vl" style="left:1112px;top:265px;height:64px;background:#ebebeb"></div>
<div class="vl" style="left:1154px;top:265px;height:64px;background:#ebebeb"></div>
<div class="vl" style="left:1227px;top:265px;height:64px;background:#ebebeb"></div>
<div class="vl" style="left:1308px;top:265px;height:64px;background:#ebebeb"></div>
<div class="vl" style="left:1389px;top:265px;height:64px;background:#ebebeb"></div>
<div class="vl" style="left:1454px;top:265px;height:64px;background:#ebebeb"></div>
<div class="vl" style="left:1524px;top:265px;height:64px;background:#ebebeb"></div>
<div class="vl" style="left:1585px;top:265px;height:64px;background:#ebebeb"></div>
<div class="hc" style="left:462px;width:55px;top:275px">Clerical</div>
<div class="abs" style="left:485.2px;top:308px;line-height:0"><svg width="9" height="13" viewBox="0 0 9 13"><path d="M0 5.5 L4.5 0 L9 5.5Z M0 7.5 L4.5 13 L9 7.5Z" fill="#c6c6c6"/></svg></div>
<div class="hc" style="left:517px;width:92px;top:269px">Executive &<br>Managerial</div>
<div class="abs" style="left:558.7px;top:308px;line-height:0"><svg width="9" height="13" viewBox="0 0 9 13"><path d="M0 5.5 L4.5 0 L9 5.5Z M0 7.5 L4.5 13 L9 7.5Z" fill="#c6c6c6"/></svg></div>
<div class="hc" style="left:609px;width:58px;top:269px">Home<br>Duties</div>
<div class="abs" style="left:633.7px;top:308px;line-height:0"><svg width="9" height="13" viewBox="0 0 9 13"><path d="M0 5.5 L4.5 0 L9 5.5Z M0 7.5 L4.5 13 L9 7.5Z" fill="#c6c6c6"/></svg></div>
<div class="hc" style="left:667px;width:169px;top:269px">Independent Means; Retired;<br>Pensioner; Unemployed</div>
<div class="abs" style="left:747.2px;top:308px;line-height:0"><svg width="9" height="13" viewBox="0 0 9 13"><path d="M0 5.5 L4.5 0 L9 5.5Z M0 7.5 L4.5 13 L9 7.5Z" fill="#c6c6c6"/></svg></div>
<div class="hc" style="left:836px;width:82px;top:269px">Primary<br>production</div>
<div class="abs" style="left:872.7px;top:308px;line-height:0"><svg width="9" height="13" viewBox="0 0 9 13"><path d="M0 5.5 L4.5 0 L9 5.5Z M0 7.5 L4.5 13 L9 7.5Z" fill="#c6c6c6"/></svg></div>
<div class="hc" style="left:918px;width:80px;top:275px">Professional</div>
<div class="abs" style="left:953.7px;top:308px;line-height:0"><svg width="9" height="13" viewBox="0 0 9 13"><path d="M0 5.5 L4.5 0 L9 5.5Z M0 7.5 L4.5 13 L9 7.5Z" fill="#c6c6c6"/></svg></div>
<div class="hc" style="left:998px;width:49px;top:275px">Sales</div>
<div class="abs" style="left:1018.2px;top:308px;line-height:0"><svg width="9" height="13" viewBox="0 0 9 13"><path d="M0 5.5 L4.5 0 L9 5.5Z M0 7.5 L4.5 13 L9 7.5Z" fill="#c6c6c6"/></svg></div>
<div class="hc" style="left:1047px;width:66px;top:269px">Self<br>employed</div>
<div class="abs" style="left:1075.7px;top:308px;line-height:0"><svg width="9" height="13" viewBox="0 0 9 13"><path d="M0 5.5 L4.5 0 L9 5.5Z M0 7.5 L4.5 13 L9 7.5Z" fill="#c6c6c6"/></svg></div>
<div class="hc" style="left:1113px;width:42px;top:275px">Staff</div>
<div class="abs" style="left:1129.7px;top:308px;line-height:0"><svg width="9" height="13" viewBox="0 0 9 13"><path d="M0 5.5 L4.5 0 L9 5.5Z M0 7.5 L4.5 13 L9 7.5Z" fill="#c6c6c6"/></svg></div>
<div class="hc" style="left:1155px;width:73px;top:275px">Tradesmen</div>
<div class="abs" style="left:1187.2px;top:308px;line-height:0"><svg width="9" height="13" viewBox="0 0 9 13"><path d="M0 5.5 L4.5 0 L9 5.5Z M0 7.5 L4.5 13 L9 7.5Z" fill="#c6c6c6"/></svg></div>
<div class="hc" style="left:1228px;width:81px;top:269px">Transport &amp;<br>Recreation</div>
<div class="abs" style="left:1264.2px;top:308px;line-height:0"><svg width="9" height="13" viewBox="0 0 9 13"><path d="M0 5.5 L4.5 0 L9 5.5Z M0 7.5 L4.5 13 L9 7.5Z" fill="#c6c6c6"/></svg></div>
<div class="hc" style="left:1309px;width:81px;top:275px">Unemployed</div>
<div class="abs" style="left:1345.2px;top:308px;line-height:0"><svg width="9" height="13" viewBox="0 0 9 13"><path d="M0 5.5 L4.5 0 L9 5.5Z M0 7.5 L4.5 13 L9 7.5Z" fill="#c6c6c6"/></svg></div>
<div class="hc" style="left:1390px;width:65px;top:275px">Unknown</div>
<div class="abs" style="left:1418.2px;top:308px;line-height:0"><svg width="9" height="13" viewBox="0 0 9 13"><path d="M0 5.5 L4.5 0 L9 5.5Z M0 7.5 L4.5 13 L9 7.5Z" fill="#c6c6c6"/></svg></div>
<div class="hc" style="left:1455px;width:70px;top:269px">Not<br>Applicable</div>
<div class="abs" style="left:1485.7px;top:308px;line-height:0"><svg width="9" height="13" viewBox="0 0 9 13"><path d="M0 5.5 L4.5 0 L9 5.5Z M0 7.5 L4.5 13 L9 7.5Z" fill="#c6c6c6"/></svg></div>
<div class="hc" style="left:1525px;width:61px;top:275px">Total</div>
<div class="abs" style="left:1551.2px;top:308px;line-height:0"><svg width="9" height="13" viewBox="0 0 9 13"><path d="M0 5.5 L4.5 0 L9 5.5Z M0 7.5 L4.5 13 L9 7.5Z" fill="#c6c6c6"/></svg></div>
<div class="abs" style="left:374px;top:275px;line-height:14px;font-size:10.4px;font-weight:bold;color:#444">Occupation</div>
<div class="abs" style="left:434.5px;top:275px;line-height:0"><svg class="inf" width="12" height="12" viewBox="0 0 12 12"><circle cx="6" cy="6" r="6" fill="#98b8dd"/><text x="6" y="10" text-anchor="middle" font-family="Liberation Serif, serif" font-weight="bold" font-size="11.5" fill="#17356b">i</text></svg></div>
<div class="abs" style="left:453.5px;top:275.5px;line-height:0"><svg width="3" height="13" viewBox="0 0 3 13"><circle cx="1.5" cy="1.7" r="1.35" fill="#7c7c7c"/><circle cx="1.5" cy="6.5" r="1.35" fill="#7c7c7c"/><circle cx="1.5" cy="11.3" r="1.35" fill="#7c7c7c"/></svg></div>
<div class="abs" style="left:379px;top:307px;line-height:14px;font-size:10.5px;font-weight:bold;color:#444">Gender</div>
<div class="abs" style="left:419.5px;top:308px;line-height:0"><svg class="inf" width="12" height="12" viewBox="0 0 12 12"><circle cx="6" cy="6" r="6" fill="#98b8dd"/><text x="6" y="10" text-anchor="middle" font-family="Liberation Serif, serif" font-weight="bold" font-size="11.5" fill="#17356b">i</text></svg></div>
<div class="abs" style="left:436.5px;top:308px;line-height:0"><svg width="9" height="13" viewBox="0 0 9 13"><path d="M0 5.5 L4.5 0 L9 5.5Z M0 7.5 L4.5 13 L9 7.5Z" fill="#c6c6c6"/></svg></div>
<div class="abs" style="left:453.5px;top:308px;line-height:0"><svg width="3" height="13" viewBox="0 0 3 13"><circle cx="1.5" cy="1.7" r="1.35" fill="#7c7c7c"/><circle cx="1.5" cy="6.5" r="1.35" fill="#7c7c7c"/><circle cx="1.5" cy="11.3" r="1.35" fill="#7c7c7c"/></svg></div>
<div class="abs" style="left:379px;top:329px;line-height:26px;font-size:10.7px;font-weight:bold;color:#333">Male</div>
<div class="num" style="left:462px;width:44px;top:329px">1,358</div>
<div class="num" style="left:517px;width:81px;top:329px">1,735</div>
<div class="num" style="left:609px;width:47px;top:329px">231</div>
<div class="num" style="left:667px;width:158px;top:329px">11,072</div>
<div class="num" style="left:836px;width:71px;top:329px">2,079</div>
<div class="num" style="left:918px;width:69px;top:329px">3,114</div>
<div class="num" style="left:998px;width:38px;top:329px">1,176</div>
<div class="num" style="left:1047px;width:55px;top:329px">5,296</div>
<div class="num" style="left:1113px;width:31px;top:329px">161</div>
<div class="num" style="left:1155px;width:62px;top:329px">16,935</div>
<div class="num" style="left:1228px;width:70px;top:329px">2,863</div>
<div class="num" style="left:1309px;width:70px;top:329px">30,306</div>
<div class="num" style="left:1390px;width:54px;top:329px">39,911</div>
<div class="num" style="left:1455px;width:59px;top:329px">0</div>
<div class="num" style="left:1525px;width:50px;top:329px">116,237</div>
<div class="abs" style="left:379px;top:355px;line-height:26px;font-size:10.7px;font-weight:bold;color:#333">Female</div>
<div class="num" style="left:462px;width:44px;top:355px">3,701</div>
<div class="num" style="left:517px;width:81px;top:355px">923</div>
<div class="num" style="left:609px;width:47px;top:355px">18,854</div>
<div class="num" style="left:667px;width:158px;top:355px">11,653</div>
<div class="num" style="left:836px;width:71px;top:355px">364</div>
<div class="num" style="left:918px;width:69px;top:355px">3,745</div>
<div class="num" style="left:998px;width:38px;top:355px">2,548</div>
<div class="num" style="left:1047px;width:55px;top:355px">1,756</div>
<div class="num" style="left:1113px;width:31px;top:355px">294</div>
<div class="num" style="left:1155px;width:62px;top:355px">3,129</div>
<div class="num" style="left:1228px;width:70px;top:355px">2,233</div>
<div class="num" style="left:1309px;width:70px;top:355px">29,657</div>
<div class="num" style="left:1390px;width:54px;top:355px">34,944</div>
<div class="num" style="left:1455px;width:59px;top:355px">0</div>
<div class="num" style="left:1525px;width:50px;top:355px">113,801</div>
<div class="abs" style="left:379px;top:381px;line-height:26px;font-size:10.7px;font-weight:bold;color:#333">Total</div>
<div class="num" style="left:462px;width:44px;top:381px">5,059</div>
<div class="num" style="left:517px;width:81px;top:381px">2,658</div>
<div class="num" style="left:609px;width:47px;top:381px">19,085</div>
<div class="num" style="left:667px;width:158px;top:381px">22,725</div>
<div class="num" style="left:836px;width:71px;top:381px">2,443</div>
<div class="num" style="left:918px;width:69px;top:381px">6,859</div>
<div class="num" style="left:998px;width:38px;top:381px">3,724</div>
<div class="num" style="left:1047px;width:55px;top:381px">7,052</div>
<div class="num" style="left:1113px;width:31px;top:381px">455</div>
<div class="num" style="left:1155px;width:62px;top:381px">20,064</div>
<div class="num" style="left:1228px;width:70px;top:381px">5,096</div>
<div class="num" style="left:1309px;width:70px;top:381px">59,963</div>
<div class="num" style="left:1390px;width:54px;top:381px">74,855</div>
<div class="num" style="left:1455px;width:59px;top:381px">0</div>
<div class="num" style="left:1525px;width:50px;top:381px">230,038</div>
<div class="abs" style="left:360px;top:416px;line-height:16px;font-size:10.63px;color:#555">Data Source : Space-Time Research synthetic data</div>
<div class="abs" style="left:360px;top:434px;line-height:16px;font-size:10.85px;color:#555">For further information see <u style="color:#333">Data Confidentiality</u></div>
<!-- FOOTER -->
<div id="ftr">
  <div class="fl" style="left:1219px">Feedback</div>
  <div class="fl" style="left:1276px">Enquiry</div>
  <div class="fl" style="left:1324px">Need Help?</div>
  <div class="fl" style="left:1389px">Training</div>
  <div id="pw"><span style="letter-spacing:.43px">Powered by SuperSTAR</span><br><span style="letter-spacing:.05px">Space-Time Research</span></div>
  <div style="position:absolute;left:1569px;top:2px;width:21px;height:20px;background:#0d1424">
    <svg width="21" height="20" viewBox="0 0 21 20" style="overflow:visible"><path d="M7.3 14.3 L12.3 13.2 C15.6 12.2 15.4 4.6 19.8 3.3 L23 3.1 L23 5.5 L20.9 5.8 C17.6 7 18.2 14.6 13.6 15.4 L7.5 16.3 Z" fill="#e8b11c"/></svg>
  </div>
</div>
</body>
</html>
